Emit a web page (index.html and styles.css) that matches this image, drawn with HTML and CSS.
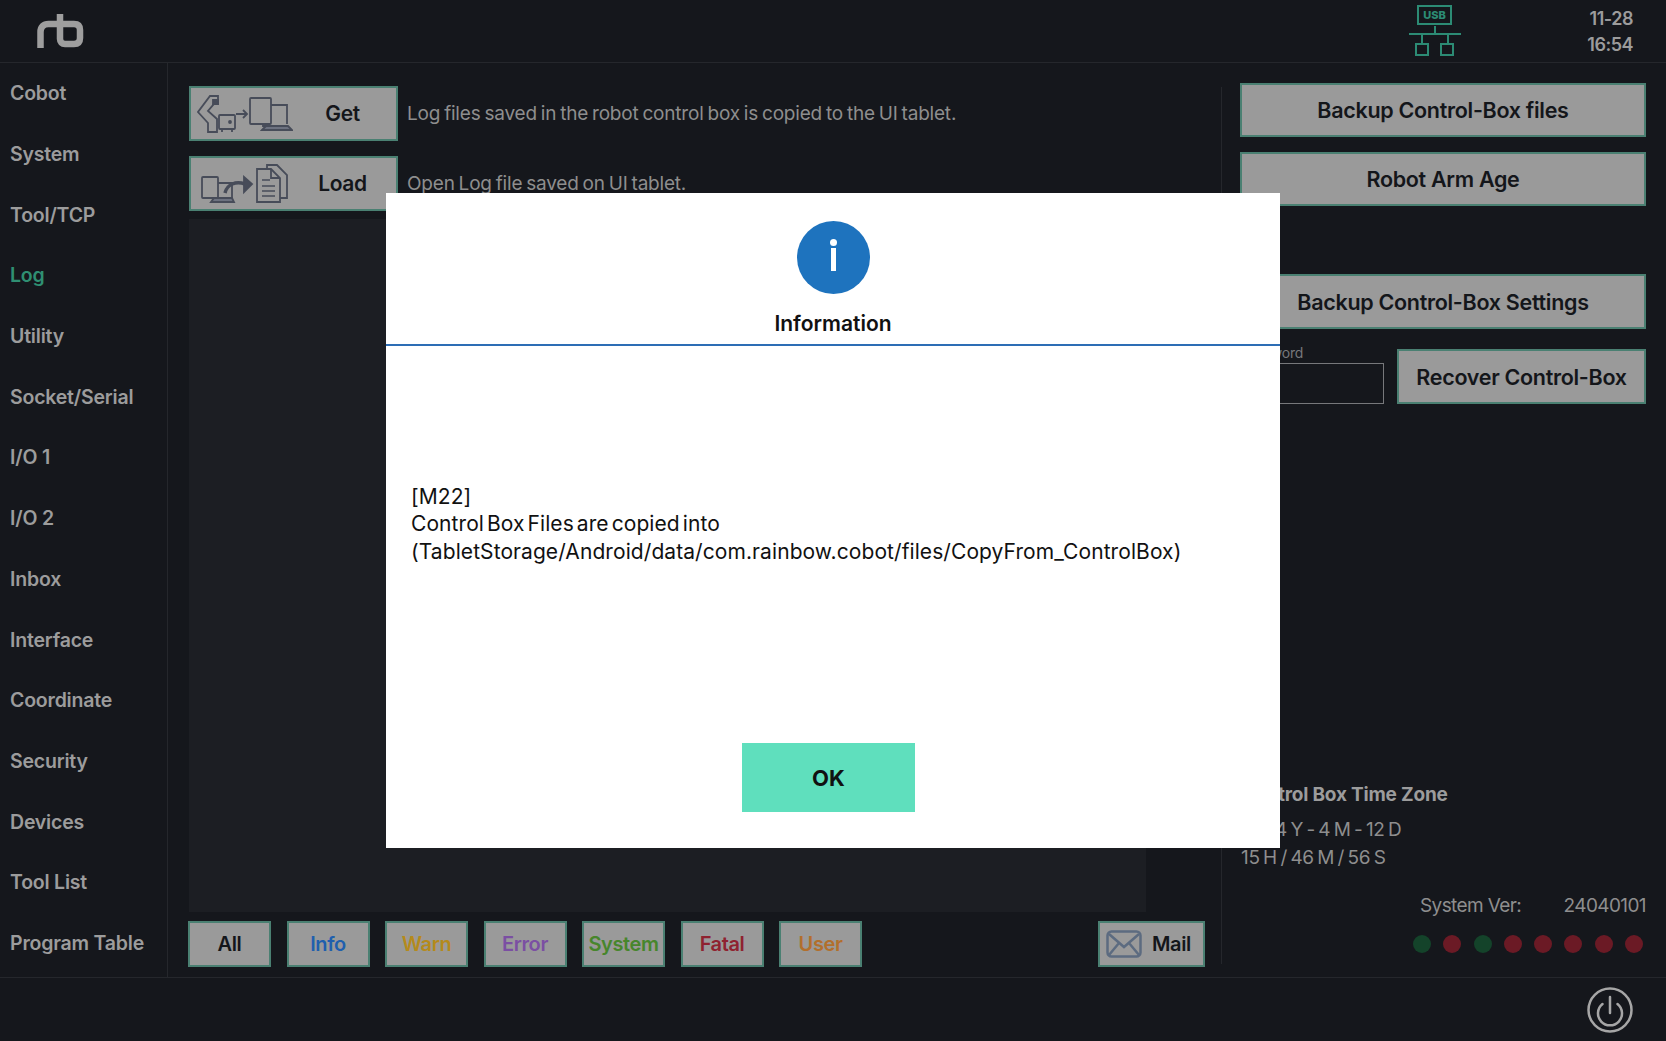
FILE: index.html
```html
<!DOCTYPE html>
<html lang="en">
<head>
    <meta charset="UTF-8">
    <title>Log</title>
    <link rel="stylesheet" href="styles.css">
</head>
<body>
<div class="app">
    <header class="topbar">
        <svg class="logo" viewBox="0 0 48 36" width="48" height="36" fill="none" stroke="#9e9e9e" stroke-width="6.5">
            <path d="M3.500 35V19c0-5 3-8 8-8h9"/>
            <path d="M23 1v25c0 3 2 5 5 5h9c4 0 6-2 6-6v-8c0-4-2-6-6-6H23"/>
        </svg>
        <svg class="usb" viewBox="0 0 54 52" width="54" height="52" fill="none" stroke="#2c8b74" stroke-width="2">
            <rect x="10" y="1" width="33" height="18"/>
            <text x="26.500" y="14" class="usb-text">USB</text>
            <path d="M27 21v8M1 29h52M14 29v9M40 29v9"/>
            <rect x="8" y="39" width="12" height="11"/>
            <rect x="33" y="39" width="12" height="11"/>
        </svg>
        <div class="clock">
            <div>11-28</div>
            <div>16:54</div>
        </div>
    </header>

    <div class="middle">
        <nav class="sidebar">
            <a>Cobot</a>
            <a>System</a>
            <a>Tool/TCP</a>
            <a class="active">Log</a>
            <a>Utility</a>
            <a>Socket/Serial</a>
            <a>I/O 1</a>
            <a>I/O 2</a>
            <a>Inbox</a>
            <a>Interface</a>
            <a>Coordinate</a>
            <a>Security</a>
            <a>Devices</a>
            <a>Tool List</a>
            <a>Program Table</a>
        </nav>

        <main class="log-panel">
            <div class="log-row">
                <button class="btn icon-btn">
                    <svg viewBox="0 0 96 40" width="96" height="40" fill="none" stroke="#474c59" stroke-width="1.800">
                        <path d="M21 2H13L1 18l10 11v9h9V25L11 17l6-7h4z"/>
                        <path d="M16 6h5v4h-5z" fill="#474c59"/>
                        <rect x="22" y="21" width="16" height="14" rx="1"/>
                        <path d="M25 35v3M35 35v3"/>
                        <circle cx="33" cy="28" r="1" fill="#474c59"/>
                        <path d="M39 20h11M46 16l4 4-4 4"/>
                        <rect x="53" y="4" width="21" height="26" rx="1"/>
                        <path d="M74 11h16v19M66 30v2h24"/>
                        <path d="M65 36l4-4h22l4 4z" fill="#6d7280"/>
                    </svg>
                    <span class="btn-label">Get</span>
                </button>
                <p class="desc">Log files saved in the robot control box is copied to the UI tablet.</p>
            </div>
            <div class="log-row second">
                <button class="btn icon-btn">
                    <svg viewBox="0 0 96 40" width="96" height="40" fill="none" stroke="#474c59" stroke-width="1.800">
                        <rect x="5" y="13" width="16" height="21" rx="1"/>
                        <path d="M21 19h14v15H21"/>
                        <path d="M14 38l3-4h18l2 4z" fill="#6d7280"/>
                        <path d="M28 29c2-9 11-12 20-9" stroke-width="3.500"/>
                        <path d="M47 13l8 7-8 8z" fill="#474c59"/>
                        <path d="M60 5h14l9 9v24H60z"/>
                        <path d="M70 5V1h10l10 10v23h-7M74 5v9h9"/>
                        <path d="M65 16h8M65 22h13M65 27h13M65 32h13" stroke-width="1.500"/>
                    </svg>
                    <span class="btn-label">Load</span>
                </button>
                <p class="desc">Open Log file saved on UI tablet.</p>
            </div>

            <div class="log-view"></div>

            <div class="filters">
                <button class="btn filter">All</button>
                <button class="btn filter info">Info</button>
                <button class="btn filter warn">Warn</button>
                <button class="btn filter error">Error</button>
                <button class="btn filter system">System</button>
                <button class="btn filter fatal">Fatal</button>
                <button class="btn filter user">User</button>
                <button class="btn filter mail">
                    <svg viewBox="0 0 36 28" width="36" height="28" fill="none" stroke="#5c6b80" stroke-width="2.500">
                        <rect x="1.500" y="1.500" width="33" height="25" rx="4"/>
                        <path d="M3 4l15 13L33 4M3 25l10-12M33 25L23 13"/>
                    </svg>
                    Mail
                </button>
            </div>
        </main>

        <div class="divider"></div>

        <aside class="side-panel">
            <button class="btn wide">Backup Control-Box files</button>
            <button class="btn wide">Robot Arm Age</button>
            <button class="btn wide backup-settings">Backup Control-Box Settings</button>

            <div class="recover-row">
                <div class="password">
                    <label>Password</label>
                    <div class="password-box"></div>
                </div>
                <button class="btn wide recover">Recover Control-Box</button>
            </div>

            <div class="time-zone">
                <h4>Control Box Time Zone</h4>
                <div>2024 Y - 4 M - 12 D</div>
                <div>15 H / 46 M / 56 S</div>
            </div>

            <div class="version">
                <span>System Ver:</span>
                <span>24040101</span>
            </div>

            <div class="dots">
                <i class="green"></i>
                <i></i>
                <i class="green"></i>
                <i></i>
                <i></i>
                <i></i>
                <i></i>
                <i></i>
            </div>
        </aside>
    </div>

    <footer class="bottombar">
        <svg viewBox="0 0 46 46" width="46" height="46" fill="none" stroke="#a6a6a6" stroke-width="2.500">
            <circle cx="23" cy="23" r="21.500"/>
            <path d="M15.500 17a12 12 0 1 0 15 0M23 10v16" stroke-linecap="round"/>
        </svg>
    </footer>

    <div class="dialog">
        <div class="dialog-head">
            <div class="info-icon">
                <span class="info-dot"></span>
                <span class="info-bar"></span>
            </div>
            <div class="dialog-title">Information</div>
        </div>
        <div class="dialog-body">
            <p>[M22]<br>Control Box Files are copied into<br>(TabletStorage/Android/data/com.rainbow.cobot/files/CopyFrom_ControlBox)</p>
        </div>
        <div class="dialog-foot">
            <button class="ok">OK</button>
        </div>
    </div>
</div>
</body>
</html>
```

FILE: styles.css
```css
* {
    box-sizing: border-box;
}
body {
    margin: 0;
    background-color: #15171c;
    font-family: Inter, "Liberation Sans", sans-serif;
    color: #9c9c9c;
    overflow: hidden;
}
.app {
    position: relative;
    width: 1666px;
    height: 1041px;
    display: flex;
    flex-direction: column;
}
.topbar {
    height: 63px;
    flex: none;
    display: flex;
    align-items: center;
    border-bottom: 1px solid #25272c;
    padding-left: 37px;
}
.logo {
    margin-top: -1px;
}
.usb {
    margin-left: auto;
    margin-top: -1px;
}
.usb-text {
    font-size: 11px;
    font-weight: 800;
    fill: #2c8b74;
    stroke: none;
    text-anchor: middle;
}
.clock {
    width: 204px;
    padding: 2px 33px 0 0;
    text-align: right;
    font-size: 18px;
    font-weight: 600;
    line-height: 26px;
    letter-spacing: -0.5px;
}
.middle {
    flex: 1;
    display: flex;
    min-height: 0;
}
.sidebar {
    width: 168px;
    flex: none;
    border-right: 1px solid #25272c;
    padding-left: 10px;
}
.sidebar a {
    display: flex;
    align-items: center;
    height: 60.7px;
    font-size: 19.500px;
    font-weight: 600;
    letter-spacing: -0.2px;
}
.sidebar a.active {
    color: #2f8f72;
}
.btn {
    display: flex;
    align-items: center;
    justify-content: center;
    font-family: inherit;
    background-color: #9a9a9a;
    border: 2px solid #4a8072;
    color: #14161a;
    font-size: 21px;
    font-weight: 600;
    letter-spacing: -0.4px;
    padding: 0;
}
.log-panel {
    width: 1053px;
    flex: none;
    padding: 23px 16px 10px 21px;
    display: flex;
    flex-direction: column;
}
.divider {
    width: 1px;
    flex: none;
    margin: 24px 0 13px;
    background-color: #25272c;
}
.log-row {
    display: flex;
    align-items: center;
    gap: 9px;
    height: 55px;
}
.log-row.second {
    margin-top: 15px;
}
.icon-btn {
    width: 209px;
    height: 55px;
    justify-content: flex-start;
    padding-left: 6px;
}
.btn-label {
    width: 99px;
    text-align: center;
}
.desc {
    margin: 0;
    font-size: 19px;
    letter-spacing: -0.2px;
    word-spacing: -1.2px;
    color: #8e8e8e;
}
.log-view {
    flex: 1;
    margin-top: 8px;
    margin-right: 59px;
    background-color: #1c1e23;
}
.filters {
    display: flex;
    gap: 15.500px;
    margin-top: 9px;
    height: 46px;
    margin-left: -1px;
}
.filter {
    width: 83px;
    height: 46px;
    font-size: 20px;
}
.info {
    color: #1f5fae;
}
.warn {
    color: #b58a1c;
}
.error {
    color: #7b4fa3;
}
.system {
    color: #47862c;
}
.fatal {
    color: #8f2230;
}
.user {
    color: #b26f2c;
}
.mail {
    width: 107px;
    margin-left: auto;
    gap: 10px;
    justify-content: flex-start;
    padding-left: 6px;
}
.side-panel {
    flex: 1;
    padding: 20px 20px 0 18px;
    display: flex;
    flex-direction: column;
}
.wide {
    height: 54px;
    flex: none;
    width: 100%;
    font-size: 21.500px;
    letter-spacing: -0.3px;
}
.wide + .wide {
    margin-top: 15px;
}
.wide.backup-settings {
    margin-top: 68px;
    height: 55px;
}
.recover-row {
    display: flex;
    justify-content: space-between;
    margin-top: 20px;
}
.password {
    width: 144px;
    font-size: 14px;
    letter-spacing: -0.2px;
    color: #77787b;
}
.password label {
    display: block;
    height: 14px;
    line-height: 7px;
}
.password-box {
    height: 41px;
    border: 1px solid #77787b;
}
.recover {
    width: 249px;
    height: 55px;
}
.time-zone {
    margin-top: auto;
    padding-left: 1px;
    font-size: 19px;
    line-height: 27.500px;
    letter-spacing: -0.3px;
    word-spacing: -1.600px;
    color: #8e8e8e;
}
.time-zone h4 {
    margin: 0 0 9px;
    font-size: 19px;
    font-weight: 700;
    letter-spacing: -0.2px;
    word-spacing: 0;
    color: #9c9c9c;
    line-height: 24px;
}
.version {
    display: flex;
    justify-content: space-between;
    margin: 23px 0 0 180px;
    font-size: 19px;
    line-height: 24px;
    letter-spacing: -0.6px;
    color: #8e8e8e;
}
.dots {
    display: flex;
    justify-content: space-between;
    margin: 17px 3px 24px 173px;
}
.dots i {
    width: 18px;
    height: 18px;
    border-radius: 50%;
    background-color: #6b1a25;
}
.dots i.green {
    background-color: #14432a;
}
.bottombar {
    height: 64px;
    flex: none;
    border-top: 1px solid #25272c;
    display: flex;
    justify-content: flex-end;
    align-items: center;
    padding-right: 33px;
}
.dialog {
    position: absolute;
    left: 386px;
    top: 193px;
    width: 894px;
    height: 655px;
    background: white;
    color: #111;
    display: flex;
    flex-direction: column;
}
.dialog-head {
    height: 153px;
    flex: none;
    border-bottom: 2px solid #2d6db5;
    display: flex;
    flex-direction: column;
    align-items: center;
    padding-top: 28px;
}
.info-icon {
    width: 73px;
    height: 73px;
    border-radius: 50%;
    background-color: #1e73be;
    display: flex;
    flex-direction: column;
    align-items: center;
    padding-top: 18px;
}
.info-dot {
    width: 7px;
    height: 7px;
    border-radius: 50%;
    background: white;
}
.info-bar {
    width: 5px;
    height: 23px;
    margin-top: 2px;
    background: white;
}
.dialog-title {
    margin-top: 17px;
    font-size: 21px;
    font-weight: 600;
    line-height: 26px;
}
.dialog-body {
    flex: 1;
    display: flex;
    align-items: center;
    padding: 0 25px;
}
.dialog-body p {
    margin: 0;
    font-size: 21px;
    line-height: 27.600px;
    letter-spacing: 0.08px;
    word-spacing: -3px;
    padding-bottom: 41px;
}
.dialog-foot {
    height: 105px;
    flex: none;
    padding-left: 356px;
}
.ok {
    width: 173px;
    height: 69px;
    background-color: #5fdfbd;
    border: none;
    font-family: inherit;
    font-size: 22px;
    font-weight: 700;
    color: #111;
}
```
